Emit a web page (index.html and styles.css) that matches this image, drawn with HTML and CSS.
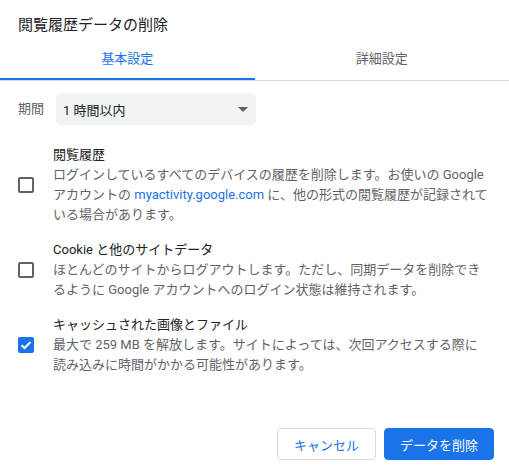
FILE: index.html
```html
<!DOCTYPE html>
<html lang="ja">
<head>
<meta charset="utf-8">
<title>閲覧履歴データの削除</title>
<link rel="stylesheet" href="styles.css">
</head>
<body>
<div class="dialog">
  <div class="title">閲覧履歴データの削除</div>
  <div class="tabs">
    <div class="tab active">基本設定</div>
    <div class="tab">詳細設定</div>
  </div>
  <div class="period">
    <span class="period-label">期間</span>
    <div class="select">
      <span>1 時間以内</span>
      <svg class="arrow" width="10" height="5" viewBox="0 0 10 5"><polygon points="0,0 10,0 5,5" fill="#5f6368"/></svg>
    </div>
  </div>
  <div class="items">
    <div class="item">
      <div class="cb"><span class="box"></span></div>
      <div class="text">
        <div class="item-title">閲覧履歴</div>
        <div class="desc">ログインしているすべてのデバイスの履歴を削除します。お使いの Google アカウントの <span class="link">myactivity.google.com</span> に、他の形式の閲覧履歴が記録されている場合があります。</div>
      </div>
    </div>
    <div class="item">
      <div class="cb"><span class="box"></span></div>
      <div class="text">
        <div class="item-title">Cookie と他のサイトデータ</div>
        <div class="desc">ほとんどのサイトからログアウトします。ただし、同期データを削除できるように Google アカウントへのログイン状態は維持されます。</div>
      </div>
    </div>
    <div class="item">
      <div class="cb">
        <svg class="checked" width="16" height="16" viewBox="0 0 16 16"><rect width="16" height="16" rx="2" fill="#1a73e8"/><polyline points="3.5,8.2 6.5,11 12.5,5" fill="none" stroke="#fff" stroke-width="2"/></svg>
      </div>
      <div class="text">
        <div class="item-title">キャッシュされた画像とファイル</div>
        <div class="desc">最大で 259 MB を解放します。サイトによっては、次回アクセスする際に<br>読み込みに時間がかかる可能性があります。</div>
      </div>
    </div>
  </div>
  <div class="footer">
    <button class="btn cancel">キャンセル</button>
    <button class="btn primary">データを削除</button>
  </div>
</div>
</body>
</html>
```

FILE: styles.css
```css
html, body {
  margin: 0;
  padding: 0;
  background: #fff;
}
body {
  font-family: Roboto, "Noto Sans CJK JP", sans-serif;
  font-size: 13px;
  color: #202124;
}
.dialog {
  display: flex;
  flex-direction: column;
  height: 475px;
  box-sizing: border-box;
}
.title {
  font-size: 15px;
  line-height: 20px;
  padding: 15px 18px 5px;
  color: #202124;
}
.tabs {
  display: flex;
  border-bottom: 1px solid #dadce0;
}
.tab {
  flex: 1;
  height: 40px;
  box-sizing: border-box;
  line-height: 38px;
  text-align: center;
  color: #5f6368;
  border-bottom: 2px solid transparent;
}
.tab.active {
  color: #1a73e8;
  border-bottom-color: #1a73e8;
}
.period {
  display: flex;
  align-items: center;
  margin-top: 12px;
  padding-left: 18px;
}
.period-label {
  color: #5f6368;
  line-height: 20px;
  width: 38px;
}
.select {
  width: 200px;
  height: 32px;
  box-sizing: border-box;
  background: #f1f3f4;
  border-radius: 4px;
  display: flex;
  align-items: center;
  justify-content: space-between;
  padding: 0 8px 0 7px;
  color: #202124;
}
.arrow {
  display: block;
}
.items {
  margin-top: 20px;
  display: flex;
  flex-direction: column;
  gap: 15px;
}
.item {
  display: flex;
  align-items: center;
  padding: 0 18px;
}
.cb {
  width: 16px;
  flex: none;
  margin-right: 19px;
  display: flex;
}
.box {
  width: 16px;
  height: 16px;
  box-sizing: border-box;
  border: 2px solid #5f6368;
  border-radius: 2px;
}
.checked {
  display: block;
}
.text {
  flex: 1;
  line-height: 20px;
}
.item-title {
  color: #202124;
}
.desc {
  color: #5f6368;
}
.link {
  color: #1a73e8;
}
.footer {
  margin-top: auto;
  display: flex;
  justify-content: flex-end;
  gap: 8px;
  padding: 0 15px 15px 0;
}
.btn {
  font-family: Roboto, "Noto Sans CJK JP", sans-serif;
  font-size: 13px;
  height: 32px;
  box-sizing: border-box;
  padding: 0 16px;
  border-radius: 4px;
  cursor: pointer;
}
.cancel {
  background: #fff;
  border: 1px solid #dadce0;
  color: #1a73e8;
}
.primary {
  background: #1a73e8;
  border: 1px solid #1a73e8;
  color: #fff;
  padding: 0 15px;
}
```
